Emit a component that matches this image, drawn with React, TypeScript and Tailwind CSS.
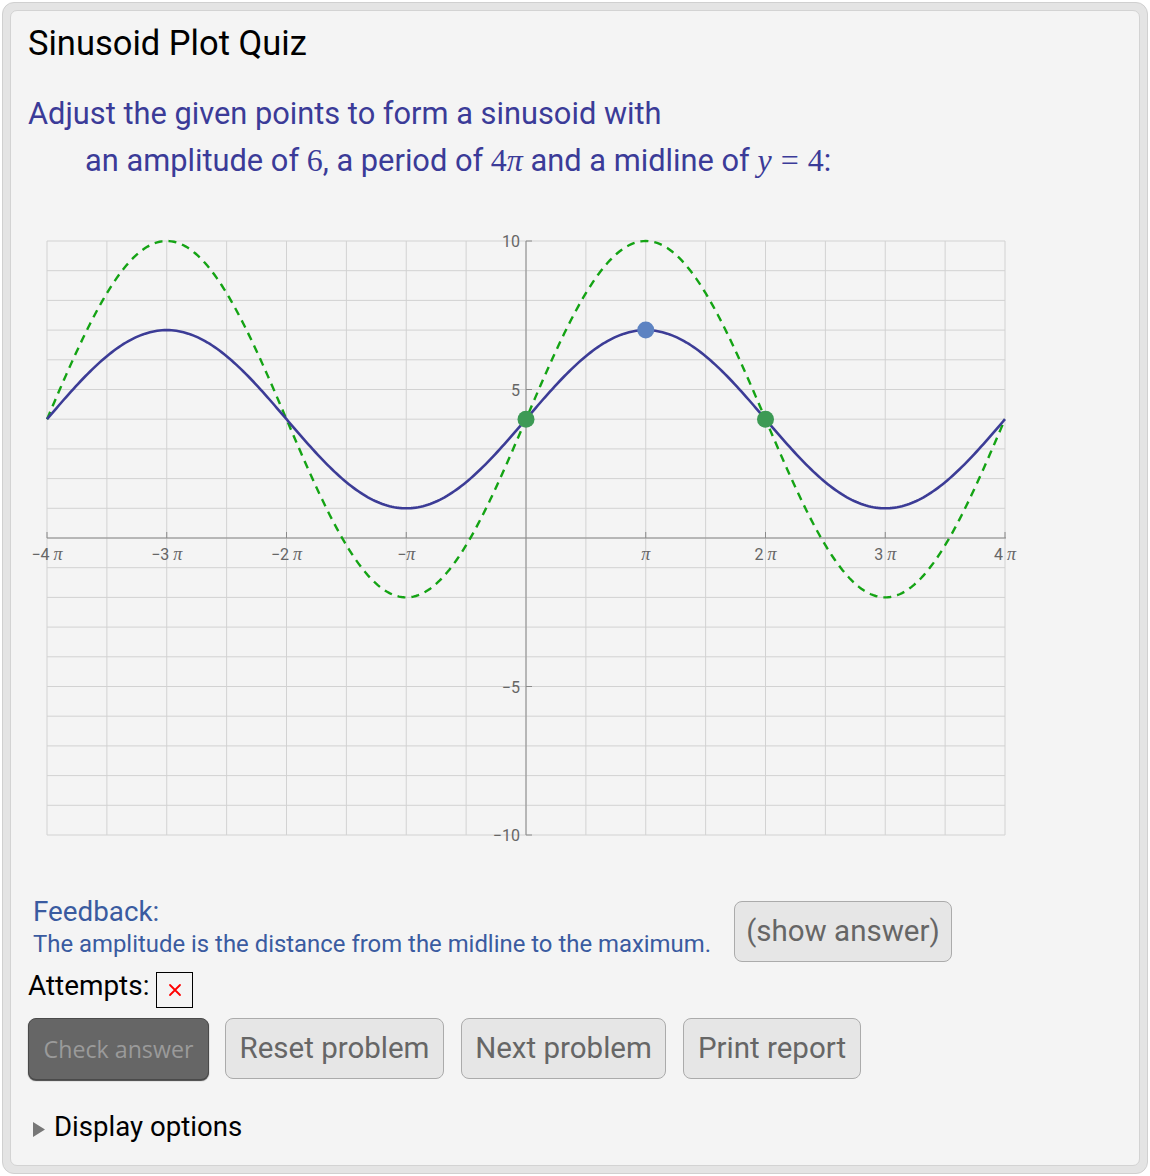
import React from "react";

const X0 = 19;
const PX = 119.75;
const Y0 = 313;
const PY = 29.7;
const tx = (t: number) => X0 + (t / Math.PI + 4) * PX;
const ty = (v: number) => Y0 - v * PY;

function curve(amp: number) {
  const pts: string[] = [];
  const N = 400;
  for (let i = 0; i <= N; i++) {
    const t = -4 * Math.PI + (8 * Math.PI * i) / N;
    const v = 4 + amp * Math.sin(t / 2);
    pts.push(`${i === 0 ? "M" : "L"}${tx(t).toFixed(2)},${ty(v).toFixed(2)}`);
  }
  return pts.join(" ");
}

function Plot() {
  const vlines = Array.from({ length: 17 }, (_, i) => X0 + i * (PX / 2));
  const hlines = Array.from({ length: 21 }, (_, i) => ty(10 - i));
  const xlabels: { k: number; s: string }[] = [
    { k: -4, s: "\u22124 " },
    { k: -3, s: "\u22123 " },
    { k: -2, s: "\u22122 " },
    { k: -1, s: "\u2212" },
    { k: 1, s: "" },
    { k: 2, s: "2 " },
    { k: 3, s: "3 " },
    { k: 4, s: "4 " },
  ];
  const ylabels = [10, 5, -5, -10];
  const ax = tx(0);
  return (
    <svg width={1010} height={625} className="block" style={{ fontFamily: "Roboto, 'Liberation Sans', sans-serif" }}>
      {vlines.map((x, i) => (
        <line key={"v" + i} x1={x} x2={x} y1={ty(10)} y2={ty(-10)} stroke="#d2d2d2" strokeWidth={1} />
      ))}
      {hlines.map((y, i) => (
        <line key={"h" + i} x1={X0} x2={tx(4 * Math.PI)} y1={y} y2={y} stroke="#d2d2d2" strokeWidth={1} />
      ))}
      <line x1={X0} x2={tx(4 * Math.PI) + 1} y1={Y0} y2={Y0} stroke="#8a8a8a" strokeWidth={1} />
      <line x1={ax} x2={ax} y1={ty(10)} y2={ty(-10)} stroke="#8a8a8a" strokeWidth={1} />
      {[-4, -3, -2, -1, 1, 2, 3, 4].map((k) => (
        <line key={"t" + k} x1={tx(k * Math.PI)} x2={tx(k * Math.PI)} y1={Y0 - 6} y2={Y0} stroke="#8a8a8a" strokeWidth={1} />
      ))}
      {ylabels.map((v) => (
        <line key={"yt" + v} x1={ax} x2={ax + 6} y1={ty(v)} y2={ty(v)} stroke="#8a8a8a" strokeWidth={1} />
      ))}
      {xlabels.map(({ k, s }) => (
        <text key={"xl" + k} x={tx(k * Math.PI)} y={Y0 + 22} textAnchor="middle" fontSize={16} fill="#666">
          {s}
          <tspan fontFamily="'Liberation Serif', serif" fontStyle="italic" fontSize={18}>
            π
          </tspan>
        </text>
      ))}
      {ylabels.map((v) => (
        <text key={"yl" + v} x={ax - 6} y={ty(v) + 6} textAnchor="end" fontSize={16} fill="#666">
          {v < 0 ? "\u2212" + Math.abs(v) : v}
        </text>
      ))}
      <path d={curve(6)} fill="none" stroke="#14a314" strokeWidth={2.4} strokeDasharray="8 6" />
      <path d={curve(3)} fill="none" stroke="#3c3c96" strokeWidth={2.6} />
      <circle cx={tx(0)} cy={ty(4)} r={8.5} fill="#3d9a55" />
      <circle cx={tx(2 * Math.PI)} cy={ty(4)} r={8.5} fill="#3d9a55" />
      <circle cx={tx(Math.PI)} cy={ty(7)} r={8.5} fill="#5d83c2" />
    </svg>
  );
}

const M = "font-['Liberation_Serif',serif] text-[32px]";
const BTN = "h-[61px] rounded-[8px] border-[1.5px] border-[#ababab] bg-[#e6e6e6] text-[29.5px] text-[#666]";

export default function App() {
  return (
    <div className="bg-white p-[2px] font-['Roboto','Liberation_Sans',sans-serif]">
      <div className="w-[1146px] h-[1172px] rounded-[12px] border border-[#d0d0d0] bg-[#e4e4e4] p-[7px]">
        <div className="h-full rounded-[7px] border border-[#d3d3d3] bg-[#f4f4f4] pl-[17px] pt-[12px]">
          <h1 className="text-[34.5px] leading-[40px] text-black">Sinusoid Plot Quiz</h1>
          <div className="mt-[27px] text-[30.8px] leading-[47px] text-[#3b3b98] pl-[57px] -indent-[57px]">
            Adjust the given points to form a sinusoid with
            <br />
            an amplitude of <span className={M}>6</span>, a period of <span className={M}>4<i>π</i></span> and a midline of{" "}
            <span className={M}>
              <i>y</i>
              <span className="mx-[9px]">=</span>4
            </span>
            :
          </div>
          <div className="mt-[41px]">
            <Plot />
          </div>
          <div className="mt-[45px] flex items-start">
            <div className="pl-[5px] text-[#3a5ba0]">
              <div className="text-[27.8px] leading-[34px]">Feedback:</div>
              <div className="text-[23.9px] leading-[30px]">The amplitude is the distance from the midline to the maximum.</div>
            </div>
            <button className={"ml-[23px] mt-[6px] w-[218px] text-[28.7px] " + BTN}>(show answer)</button>
          </div>
          <div className="mt-[8px] flex items-start">
            <span className="text-[27.9px] leading-[32px] text-black">Attempts:</span>
            <span className="ml-[7px] mt-[2px] flex h-[36px] w-[37px] items-center justify-center border border-black">
              <svg width={14} height={14} viewBox="0 0 14 14">
                <path d="M2 2 L12 12 M12 2 L2 12" stroke="#ff0000" strokeWidth={1.8} strokeLinecap="round" />
              </svg>
            </span>
          </div>
          <div className="mt-[10px] flex">
            <button className="h-[62px] w-[181px] rounded-[8px] border-[1.5px] border-[#4a4a4a] bg-[#666] text-[23.2px] text-[#9a9a9a] shadow-[0_1px_1px_#444] font-['Open_Sans',sans-serif]">
              Check answer
            </button>
            <button className={"ml-[16px] w-[219px] " + BTN}>Reset problem</button>
            <button className={"ml-[17px] w-[205px] " + BTN}>Next problem</button>
            <button className={"ml-[17px] w-[178px] " + BTN}>Print report</button>
          </div>
          <div className="mt-[30px] flex items-center pl-[5px]">
            <svg width={12} height={15} className="mt-[4px]">
              <polygon points="0,0 12,7.5 0,15" fill="#777" />
            </svg>
            <span className="ml-[9px] text-[27.6px] leading-[34px] text-black">Display options</span>
          </div>
        </div>
      </div>
    </div>
  );
}
